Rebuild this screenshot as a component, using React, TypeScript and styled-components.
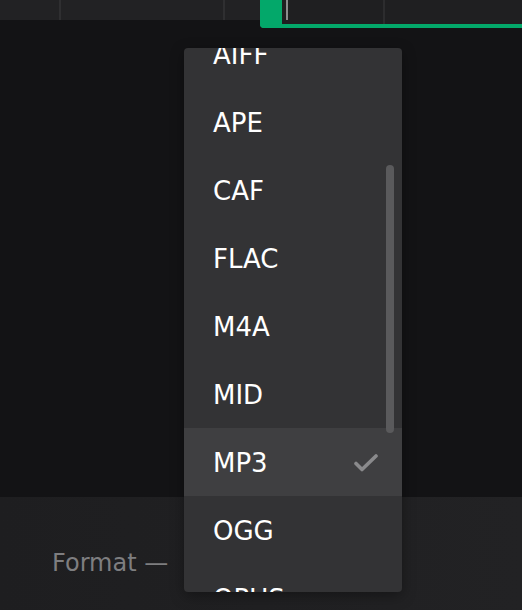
import React, { useLayoutEffect, useRef } from "react";
import styled, { createGlobalStyle } from "styled-components";

const Global = createGlobalStyle`
  html, body { margin: 0; padding: 0; background: #131315; }
  body { font-family: "DejaVu Sans", "Noto Sans", sans-serif; }
  #root { width: 522px; height: 610px; }
`;

const Page = styled.div`
  position: relative;
  width: 522px;
  height: 610px;
  overflow: hidden;
  display: flex;
  flex-direction: column;
  background: #131315;
`;

const Timeline = styled.div`
  display: flex;
  align-items: flex-start;
  height: 28px;
  flex: none;
`;

const Track = styled.div`
  width: 260px;
  height: 20px;
  display: flex;
  background: #222224;
`;

const Cell = styled.div<{ $w?: number }>`
  flex: ${(p) => (p.$w ? `0 0 ${p.$w}px` : "1")};
  border-right: 2px solid #2f2f31;
  &:last-child { border-right: none; }
`;

const Clip = styled.div`
  flex: 1;
  height: 24px;
  border-left: 22px solid #03a86a;
  border-bottom: 4px solid #03a86a;
  border-bottom-left-radius: 4px;
  background: #1f1f21;
  display: flex;
`;

const Playhead = styled.div`
  width: 2px;
  height: 20px;
  margin-left: 4px;
  background: #8c8c8e;
`;

const ClipCell = styled.div<{ $w?: number }>`
  flex: ${(p) => (p.$w ? `0 0 ${p.$w}px` : "1")};
  border-right: 2px solid #2c2c2e;
  &:last-child { border-right: none; }
`;

const Stage = styled.div`
  flex: 1;
`;

const BottomPanel = styled.div`
  height: 113px;
  flex: none;
  background: linear-gradient(90deg, #1e1e20 0%, #222224 100%);
  display: flex;
  align-items: center;
  padding-left: 52px;
  padding-top: 19px;
  box-sizing: border-box;
`;

const FieldLabel = styled.span`
  font-size: 24px;
  color: #7e7e80;
  letter-spacing: 0;
`;

const Menu = styled.div`
  position: absolute;
  left: 184px;
  top: 48px;
  width: 218px;
  height: 544px;
  border-radius: 4px;
  background: #333335;
  overflow: hidden;
  box-shadow: 0 4px 14px rgba(0, 0, 0, 0.35);
`;

const List = styled.ul`
  list-style: none;
  margin: 0;
  padding: 8px 0;
  height: 100%;
  box-sizing: border-box;
  overflow-y: auto;
  scrollbar-width: none;
  &::-webkit-scrollbar { display: none; }
`;

const Option = styled.li<{ $selected?: boolean }>`
  height: 68px;
  box-sizing: border-box;
  display: flex;
  align-items: center;
  justify-content: space-between;
  padding: 2px 24px 0 29px;
  font-size: 26px;
  line-height: 66px;
  color: #ffffff;
  background: ${(p) => (p.$selected ? "#3f3f41" : "transparent")};
`;

const Thumb = styled.div`
  position: absolute;
  right: 8px;
  top: 117px;
  width: 8px;
  height: 268px;
  border-radius: 4px;
  background: #5a5a5c;
`;

const formats = [
  "AAC", "AC3", "ADTS", "AIFF", "APE", "CAF", "FLAC", "M4A",
  "MID", "MP3", "OGG", "OPUS", "RA", "WAV", "WEBM", "WMA",
];

const Check = () => (
  <svg width="24" height="18" viewBox="0 0 24 18" fill="none">
    <path d="M2 9.5 L8 15.5 L22 2" stroke="#8a8a8c" strokeWidth="3.6" strokeLinecap="round" strokeLinejoin="round" />
  </svg>
);

export default function App() {
  const listRef = useRef<HTMLUListElement>(null);
  useLayoutEffect(() => {
    if (listRef.current) listRef.current.scrollTop = 240;
  }, []);
  return (
    <Page>
      <Global />
      <Timeline>
        <Track>
          <Cell $w={59} />
          <Cell $w={162} />
          <Cell />
        </Track>
        <Clip>
          <Playhead />
          <ClipCell $w={95} />
          <ClipCell />
        </Clip>
      </Timeline>
      <Stage />
      <BottomPanel>
        <FieldLabel>Format —</FieldLabel>
      </BottomPanel>
      <Menu>
        <List ref={listRef}>
          {formats.map((f) => (
            <Option key={f} $selected={f === "MP3"}>
              <span>{f}</span>
              {f === "MP3" && <Check />}
            </Option>
          ))}
        </List>
        <Thumb />
      </Menu>
    </Page>
  );
}
